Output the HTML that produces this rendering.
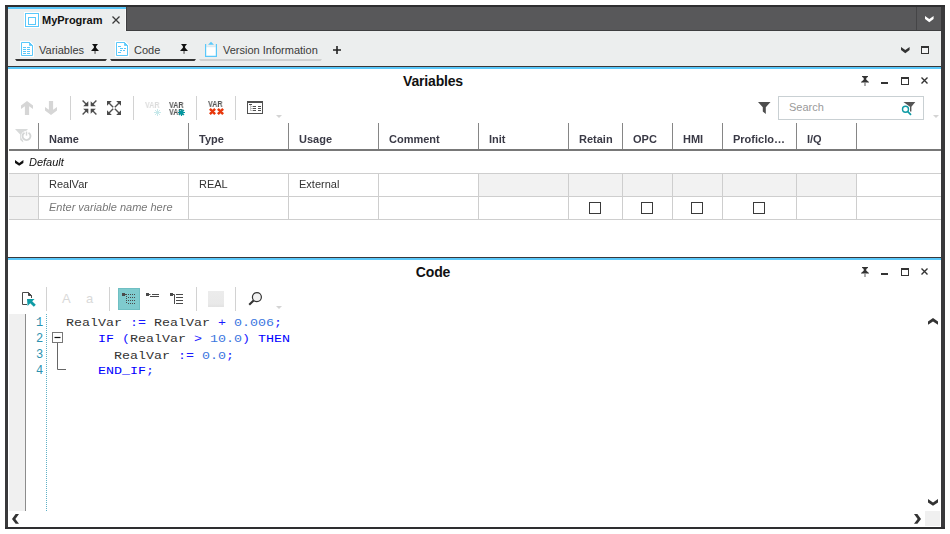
<!DOCTYPE html>
<html lang="en">
<head>
<meta charset="utf-8">
<title>MyProgram</title>
<style>
html,body{margin:0;padding:0;background:#fff;}
body{width:950px;height:534px;overflow:hidden;position:relative;font-family:"Liberation Sans",sans-serif;font-size:11px;color:#333;}
div,span{box-sizing:border-box;}
.a{position:absolute;}
.t{position:absolute;white-space:nowrap;line-height:14px;height:14px;}
.b{font-weight:bold;}
.h{color:#3a3a46;}
.i{font-style:italic;}
.vsep{position:absolute;width:1px;height:24px;background:#d2d2d2;}
.gl{position:absolute;background:#cecece;}
.gf{position:absolute;background:#f2f2f2;}
.cb{position:absolute;width:12px;height:12px;border:1.5px solid #3a3a3a;background:#fff;}
svg{position:absolute;overflow:visible;}
.mono{font-family:"Liberation Mono",monospace;font-size:11.5px;letter-spacing:1.1px;line-height:16px;white-space:pre;}
.var{font-size:8.5px;line-height:10px;height:10px;font-weight:bold;color:#555;transform:scaleX(.84);transform-origin:0 0;will-change:transform;}
.k{color:#0000ff;}
.o{color:#1a1aff;}
.n{color:#3b78e0;}
.ln{color:#2b91af;font-size:12px !important;letter-spacing:0 !important;}
</style>
</head>
<body>
<!-- outer frame -->
<div class="a" style="left:5px;top:5px;width:940px;height:524px;background:#39393b;"></div>
<div class="a" style="left:5px;top:527px;width:940px;height:2px;background:#2e2e30;"></div>
<div class="a" style="left:5px;top:5px;width:940px;height:2px;background:#2e2e30;"></div>
<div class="a" style="left:8px;top:7px;width:933px;height:520px;background:#fff;"></div>

<!-- top tab bar -->
<div class="a" style="left:8px;top:7px;width:933px;height:24px;background:#58585a;border-bottom:1px solid #3e3e40;"></div>
<div class="a" style="left:916px;top:7px;width:1px;height:23px;background:#454547;"></div>
<div class="a" style="left:8px;top:7px;width:118px;height:24px;background:#eceeee;border-top:2px solid #5ac8fa;"></div>
<div class="a" style="left:125px;top:9px;width:1px;height:22px;background:#f7f8f8;"></div>
<div class="a" style="left:126px;top:7px;width:1px;height:23px;background:#3e3e40;"></div>
<!-- sub bar -->
<div class="a" style="left:8px;top:31px;width:933px;height:35px;background:#eceeee;"></div>

<!--TABS-BEGIN-->
<!-- program tab -->
<svg style="left:24px;top:12px;" width="16" height="16" viewBox="0 0 16 16">
  <rect x="0" y="0" width="16" height="16" fill="#fff"/>
  <rect x="1.5" y="1.5" width="13" height="13" fill="none" stroke="#5ac8fa" stroke-width="1"/>
  <rect x="4.5" y="5.5" width="7" height="7" fill="none" stroke="#5ac8fa" stroke-width="1"/>
</svg>
<div class="t b" style="left:42px;top:13px;color:#111;">MyProgram</div>
<svg style="left:112px;top:16px;" width="8" height="8" viewBox="0 0 8 8"><path d="M0.5 0.5 L7.5 7.5 M7.5 0.5 L0.5 7.5" stroke="#3a3a3a" stroke-width="1.25" fill="none"/></svg>
<!-- chevron top right (white) -->
<svg style="left:924.7px;top:16px;" width="8.6" height="6.2" viewBox="0 0 8.6 6.2"><path d="M0 0 L4.3 3.1 L8.6 0 V3.1 L4.3 6.2 L0 3.1 Z" fill="#fff"/></svg>

<!-- sub tabs -->
<!-- Variables icon -->
<svg style="left:20px;top:41px;" width="14" height="16" viewBox="0 0 14 16">
  <path d="M0 0 H10 L14 4 V16 H0 Z" fill="#fff"/>
  <path d="M1.5 1.5 H9.5 L12.5 4.5 V14.5 H1.5 Z" fill="#fff" stroke="#5ac8fa" stroke-width="1"/>
  <path d="M9.5 1.5 V4.5 H12.5 Z" fill="#5ac8fa" stroke="#5ac8fa" stroke-width="0.8"/>
  <path d="M3 6.5 H6 M7 6.5 H10 M3 8.5 H6 M7 8.5 H10 M3 10.5 H6 M7 10.5 H10 M3 12.5 H6 M7 12.5 H10" stroke="#5ac8fa" stroke-width="1"/>
</svg>
<div class="t" style="left:39px;top:43px;color:#3a3a3a;">Variables</div>
<svg class="pin" style="left:91px;top:44px;" width="8" height="10" viewBox="0 0 8 10"><path d="M1 0 H7 L5.1 2.2 V3.8 L8 7 H0 L2.9 3.8 V2.2 Z" fill="#111"/><rect x="3.3" y="7" width="1.5" height="2.8" fill="#777"/></svg>
<svg style="left:15px;top:59px;" width="92" height="2" viewBox="0 0 92 2"><path d="M0 0 H92 L90.5 2 H1.5 Z" fill="#333"/></svg>

<!-- Code icon -->
<svg style="left:115px;top:41px;" width="14" height="16" viewBox="0 0 14 16">
  <path d="M0 0 H10 L14 4 V16 H0 Z" fill="#fff"/>
  <path d="M1.5 1.5 H9.5 L12.5 4.5 V14.5 H1.5 Z" fill="#fff" stroke="#5ac8fa" stroke-width="1"/>
  <path d="M9.5 1.5 V4.5 H12.5 Z" fill="#5ac8fa" stroke="#5ac8fa" stroke-width="0.8"/>
  <path d="M3 5.5 H6 M5 7.5 H8 M9 7.5 H11 M5 9.5 H7 M8 9.5 H10 M3 11.5 H6" stroke="#5ac8fa" stroke-width="1"/>
</svg>
<div class="t" style="left:134px;top:43px;color:#3a3a3a;">Code</div>
<svg class="pin" style="left:180px;top:44px;" width="8" height="10" viewBox="0 0 8 10"><path d="M1 0 H7 L5.1 2.2 V3.8 L8 7 H0 L2.9 3.8 V2.2 Z" fill="#111"/><rect x="3.3" y="7" width="1.5" height="2.8" fill="#777"/></svg>
<svg style="left:110px;top:59px;" width="86" height="2" viewBox="0 0 86 2"><path d="M0 0 H86 L84.5 2 H1.5 Z" fill="#333"/></svg>

<!-- Version info icon (clipboard) -->
<svg style="left:204px;top:41px;" width="14" height="16" viewBox="0 0 14 16">
  <rect x="2" y="6" width="10" height="9.5" fill="#fff"/>
  <path d="M1.6 3 V15.4 H12.4 V3" fill="none" stroke="#5ac8fa" stroke-width="1.2"/>
  <path d="M2 5.8 H12" stroke="#bfe6fa" stroke-width="0.6"/>
  <path d="M4 3.8 L7 0.7 L10 3.8 Z" fill="#5ac8fa"/>
</svg>
<div class="t" style="left:223px;top:43px;color:#3a3a3a;">Version Information</div>
<svg style="left:199px;top:59px;" width="123" height="2" viewBox="0 0 123 2"><path d="M0 0 H123 L121.5 2 H1.5 Z" fill="#cfd1d1"/></svg>
<!-- plus -->
<svg style="left:333px;top:46px;" width="8" height="8" viewBox="0 0 8 8"><path d="M4 0 V8 M0 4 H8" stroke="#222" stroke-width="1.6"/></svg>
<!-- right chevron + square -->
<svg style="left:900.8px;top:46.8px;" width="8.6" height="6.2" viewBox="0 0 8.6 6.2"><path d="M0 0 L4.3 3.1 L8.6 0 V3.1 L4.3 6.2 L0 3.1 Z" fill="#333"/></svg>
<svg style="left:921px;top:46px;" width="8" height="8" viewBox="0 0 8 8"><rect x="0.5" y="0.5" width="7" height="7" fill="#f3f4f4" stroke="#333" stroke-width="1"/><rect x="0" y="0" width="8" height="2" fill="#333"/></svg>
<!--TABS-END-->

<!-- panel 1 top lines -->
<div class="a" style="left:8px;top:66px;width:933px;height:1px;background:#38383a;"></div>
<div class="a" style="left:8px;top:67px;width:933px;height:2px;background:#5ac8fa;"></div>
<!-- panel 2 top lines -->
<div class="a" style="left:8px;top:257px;width:933px;height:1px;background:#38383a;"></div>
<div class="a" style="left:8px;top:258px;width:933px;height:2px;background:#5ac8fa;"></div>

<!--VARS-BEGIN-->
<!-- ===== Variables panel ===== -->
<div class="t b" style="left:232px;top:72px;width:402px;text-align:center;font-size:14px;letter-spacing:-0.17px;line-height:18px;height:18px;color:#111;">Variables</div>
<!-- window controls -->
<svg style="left:861px;top:76px;" width="8" height="10" viewBox="0 0 8 10"><path d="M1 0 H7 V0.8 L5.3 2 V3.8 L8 6 V6.6 H0 V6 L2.7 3.8 V2 L1 0.8 Z" fill="#333"/><rect x="3.4" y="6.6" width="1.2" height="3.4" fill="#777"/></svg>
<div class="a" style="left:881px;top:82px;width:7px;height:2px;background:#333;"></div>
<svg style="left:901px;top:77px;" width="8" height="8" viewBox="0 0 8 8"><rect x="0.5" y="0.5" width="7" height="7" fill="#fff" stroke="#333" stroke-width="1"/><rect x="0" y="0" width="8" height="2" fill="#333"/></svg>
<svg style="left:921px;top:77px;" width="7" height="7" viewBox="0 0 7 7"><path d="M0.5 0.5 L6.5 6.5 M6.5 0.5 L0.5 6.5" stroke="#333" stroke-width="1.4" fill="none"/></svg>

<!-- toolbar: up/down arrows (disabled) -->
<svg style="left:21px;top:101px;" width="12" height="14" viewBox="0 0 12 14"><path d="M6 0 L12 4.6 V8 L8.1 5.2 V14 H3.9 V5.2 L0 8 V4.6 Z" fill="#d6d6d6"/></svg>
<svg style="left:45px;top:101px;" width="12" height="14" viewBox="0 0 12 14"><path d="M6 14 L12 9.4 V6 L8.1 8.8 V0 H3.9 V8.8 L0 6 V9.4 Z" fill="#d6d6d6"/></svg>
<div class="vsep" style="left:70px;top:96px;"></div>
<!-- collapse -->
<svg style="left:82px;top:100px;" width="15" height="15" viewBox="0 0 15 15">
  <g stroke="#505050" stroke-width="1.4" fill="none">
    <path d="M0.6 0.6 L5 5 M14.4 0.6 L10 5 M0.6 14.4 L5 10 M14.4 14.4 L10 10"/>
  </g>
  <g fill="#4a4a4a">
    <path d="M6.3 1.2 V6.3 H1.2 Z"/><path d="M8.7 1.2 V6.3 H13.8 Z"/><path d="M6.3 13.8 V8.7 H1.2 Z"/><path d="M8.7 13.8 V8.7 H13.8 Z"/>
  </g>
</svg>
<!-- expand -->
<svg style="left:107px;top:101px;" width="14" height="14" viewBox="0 0 14 14">
  <g stroke="#505050" stroke-width="1.4" fill="none">
    <path d="M2 2 L6.2 6.2 M12 2 L7.8 6.2 M2 12 L6.2 7.8 M12 12 L7.8 7.8"/>
  </g>
  <g fill="#4a4a4a">
    <path d="M0 0 H4.8 L0 4.8 Z"/><path d="M14 0 H9.2 L14 4.8 Z"/><path d="M0 14 H4.8 L0 9.2 Z"/><path d="M14 14 H9.2 L14 9.2 Z"/>
  </g>
</svg>
<div class="vsep" style="left:133px;top:96px;"></div>
<!-- VAR * (disabled) -->
<div class="t var" style="left:145px;top:100px;color:#dcdcdc;">VAR</div>
<svg style="left:154px;top:109px;" width="7" height="7" viewBox="0 0 7 7"><path d="M3.5 0 V7 M0 3.5 H7 M1 1 L6 6 M6 1 L1 6" stroke="#c3e6e9" stroke-width="0.9" fill="none"/></svg>
<!-- VAR VAR * -->
<div class="t var" style="left:169px;top:100px;">VAR</div>
<div class="t var" style="left:169px;top:107px;">VAR</div>
<svg style="left:178px;top:109px;" width="7" height="7" viewBox="0 0 7 7"><circle cx="3.5" cy="3.5" r="1.6" fill="#0097a0"/><path d="M3.5 0 V7 M0 3.5 H7 M1 1 L6 6 M6 1 L1 6" stroke="#0097a0" stroke-width="1.2" fill="none"/></svg>
<div class="vsep" style="left:196px;top:96px;"></div>
<!-- VAR XX -->
<div class="t var" style="left:208px;top:99px;">VAR</div>
<svg style="left:209px;top:108px;" width="15" height="7" viewBox="0 0 15 7"><path d="M0.9 0.9 L6.1 6.1 M6.1 0.9 L0.9 6.1 M8.9 0.9 L14.1 6.1 M14.1 0.9 L8.9 6.1" stroke="#e8380d" stroke-width="2.5" fill="none"/></svg>
<div class="vsep" style="left:235px;top:96px;"></div>
<!-- table icon -->
<svg style="left:247px;top:101px;" width="16" height="13" viewBox="0 0 16 13">
  <rect x="0.5" y="0.5" width="15" height="12" fill="#fff" stroke="#505050" stroke-width="1"/>
  <rect x="0" y="0" width="16" height="2" fill="#505050"/>
  <path d="M2 3.5 H5" stroke="#505050" stroke-width="1"/>
  <path d="M3.5 4 V10 M4 5.5 H6 M4 7.5 H6 M4 9.5 H6" stroke="#c4c4c4" stroke-width="1" fill="none"/>
  <path d="M6 5.5 H9 M11 5.5 H14 M6 7.5 H9 M11 7.5 H14 M6 9.5 H9 M11 9.5 H14" stroke="#505050" stroke-width="1"/>
</svg>
<svg style="left:276px;top:115px;" width="6" height="3" viewBox="0 0 6 3"><path d="M0 0 H6 L3 3 Z" fill="#d4d4d4"/></svg>

<!-- filter + search -->
<svg style="left:758px;top:102px;" width="13" height="12" viewBox="0 0 13 12"><path d="M0 0 H12.5 L7.8 5.3 V12 L4.8 9.6 V5.3 Z" fill="#4d4d4d"/></svg>
<div class="a" style="left:778px;top:96px;width:146px;height:24px;border:1px solid #c9d0d3;background:#fff;"></div>
<div class="t" style="left:789px;top:99px;line-height:16px;height:16px;color:#9a9a9a;">Search</div>
<svg style="left:901px;top:102px;" width="15" height="14" viewBox="0 0 15 14">
  <path d="M2.4 0 H14.3 L10.4 4.8 V9.6 H9 V4.8 Z" fill="#555"/>
  <circle cx="4.5" cy="7.3" r="3" fill="#fff" stroke="#0f9ba5" stroke-width="1.4"/>
  <path d="M6.8 9.6 L10 12.8" stroke="#0f9ba5" stroke-width="1.7" fill="none"/>
</svg>
<svg style="left:933px;top:115px;" width="6" height="3" viewBox="0 0 6 3"><path d="M0 0 H6 L3 3 Z" fill="#d4d4d4"/></svg>

<!-- grid: fills -->
<div class="gf" style="left:9px;top:174px;width:29px;height:45px;"></div>
<div class="gf" style="left:479px;top:174px;width:377px;height:22px;"></div>
<!-- header filter icon (disabled) -->
<svg style="left:15px;top:129px;" width="17" height="14" viewBox="0 0 17 14">
  <path d="M0 0 H13 L8.2 5.5 V13.5 L5.2 11 V5.5 Z" fill="#d8dada"/>
  <circle cx="11.5" cy="7.2" r="5.5" fill="#fff"/>
  <path d="M9.5 3.7 A4 4 0 1 0 13.5 3.7" fill="none" stroke="#d4d6d6" stroke-width="1.9"/>
  <path d="M11.5 2.6 V6.6" stroke="#d4d6d6" stroke-width="1.4"/>
</svg>
<!-- header vertical lines -->
<div class="a" style="left:38px;top:123px;width:1px;height:26px;background:#868686;"></div>
<div class="a" style="left:188px;top:123px;width:1px;height:26px;background:#868686;"></div>
<div class="a" style="left:288px;top:123px;width:1px;height:26px;background:#868686;"></div>
<div class="a" style="left:378px;top:123px;width:1px;height:26px;background:#868686;"></div>
<div class="a" style="left:478px;top:123px;width:1px;height:26px;background:#868686;"></div>
<div class="a" style="left:568px;top:123px;width:1px;height:26px;background:#868686;"></div>
<div class="a" style="left:622px;top:123px;width:1px;height:26px;background:#868686;"></div>
<div class="a" style="left:672px;top:123px;width:1px;height:26px;background:#868686;"></div>
<div class="a" style="left:722px;top:123px;width:1px;height:26px;background:#868686;"></div>
<div class="a" style="left:796px;top:123px;width:1px;height:26px;background:#868686;"></div>
<div class="a" style="left:856px;top:123px;width:1px;height:26px;background:#868686;"></div>
<!-- header bottom line -->
<div class="a" style="left:9px;top:149px;width:932px;height:2px;background:#787878;"></div>
<!-- header labels -->
<div class="t b h" style="left:49px;top:132px;">Name</div>
<div class="t b h" style="left:199px;top:132px;">Type</div>
<div class="t b h" style="left:299px;top:132px;">Usage</div>
<div class="t b h" style="left:389px;top:132px;">Comment</div>
<div class="t b h" style="left:489px;top:132px;">Init</div>
<div class="t b h" style="left:579px;top:132px;">Retain</div>
<div class="t b h" style="left:633px;top:132px;">OPC</div>
<div class="t b h" style="left:683px;top:132px;">HMI</div>
<div class="t b h" style="left:733px;top:132px;">Proficlo…</div>
<div class="t b h" style="left:807px;top:132px;">I/Q</div>
<!-- group row -->
<svg style="left:15px;top:160px;" width="8.4" height="5.8" viewBox="0 0 8.4 5.8"><path d="M0 0 L4.2 2.9 L8.4 0 V2.9 L4.2 5.8 L0 2.9 Z" fill="#111"/></svg>
<div class="t i" style="left:29px;top:155px;color:#111;">Default</div>
<!-- horizontal grid lines -->
<div class="gl" style="left:9px;top:173px;width:932px;height:1px;"></div>
<div class="gl" style="left:9px;top:196px;width:932px;height:1px;"></div>
<div class="gl" style="left:9px;top:219px;width:932px;height:1px;"></div>
<!-- vertical grid lines -->
<div class="gl" style="left:38px;top:174px;width:1px;height:45px;"></div>
<div class="gl" style="left:188px;top:174px;width:1px;height:45px;"></div>
<div class="gl" style="left:288px;top:174px;width:1px;height:45px;"></div>
<div class="gl" style="left:378px;top:174px;width:1px;height:45px;"></div>
<div class="gl" style="left:478px;top:174px;width:1px;height:45px;"></div>
<div class="gl" style="left:568px;top:174px;width:1px;height:45px;"></div>
<div class="gl" style="left:622px;top:174px;width:1px;height:45px;"></div>
<div class="gl" style="left:672px;top:174px;width:1px;height:45px;"></div>
<div class="gl" style="left:722px;top:174px;width:1px;height:45px;"></div>
<div class="gl" style="left:796px;top:174px;width:1px;height:45px;"></div>
<div class="gl" style="left:856px;top:174px;width:1px;height:45px;"></div>
<!-- row 1 -->
<div class="t" style="left:49px;top:177px;">RealVar</div>
<div class="t" style="left:199px;top:177px;">REAL</div>
<div class="t" style="left:299px;top:177px;">External</div>
<!-- row 2 -->
<div class="t i" style="left:49px;top:200px;color:#777;">Enter variable name here</div>
<div class="cb" style="left:589px;top:202px;"></div>
<div class="cb" style="left:641px;top:202px;"></div>
<div class="cb" style="left:691px;top:202px;"></div>
<div class="cb" style="left:753px;top:202px;"></div>
<!--VARS-END-->

<!--CODE-BEGIN-->
<!-- ===== Code panel ===== -->
<div class="t b" style="left:232px;top:263px;width:402px;text-align:center;font-size:14px;letter-spacing:-0.17px;line-height:18px;height:18px;color:#111;">Code</div>
<!-- window controls -->
<svg style="left:861px;top:267px;" width="8" height="10" viewBox="0 0 8 10"><path d="M1 0 H7 V0.8 L5.3 2 V3.8 L8 6 V6.6 H0 V6 L2.7 3.8 V2 L1 0.8 Z" fill="#333"/><rect x="3.4" y="6.6" width="1.2" height="3.4" fill="#777"/></svg>
<div class="a" style="left:881px;top:273px;width:7px;height:2px;background:#333;"></div>
<svg style="left:901px;top:268px;" width="8" height="8" viewBox="0 0 8 8"><rect x="0.5" y="0.5" width="7" height="7" fill="#fff" stroke="#333" stroke-width="1"/><rect x="0" y="0" width="8" height="2" fill="#333"/></svg>
<svg style="left:921px;top:268px;" width="7" height="7" viewBox="0 0 7 7"><path d="M0.5 0.5 L6.5 6.5 M6.5 0.5 L0.5 6.5" stroke="#333" stroke-width="1.4" fill="none"/></svg>

<!-- toolbar -->
<svg style="left:22px;top:292px;" width="14" height="15" viewBox="0 0 14 15">
  <path d="M0.5 0.5 H6.5 L9.5 3.5 V6 M5 12.5 H0.5 V0.5" fill="none" stroke="#4a4a4a" stroke-width="1"/>
  <path d="M6.5 0.5 V3.5 H9.5 Z" fill="#4a4a4a" stroke="#4a4a4a" stroke-width="1"/>
  <path d="M5 7 H12.6 L10.2 9.2 L13.8 12.8 L11.8 14.8 L8.2 11.2 L5.6 14 Z" fill="#0f9ba5"/>
</svg>
<div class="vsep" style="left:46px;top:287px;"></div>
<div class="t" style="left:62px;top:291px;font-size:13px;line-height:16px;height:16px;color:#d9d9d9;">A</div>
<div class="t" style="left:86px;top:291px;font-size:13px;line-height:16px;height:16px;color:#d9d9d9;">a</div>
<div class="vsep" style="left:109px;top:287px;"></div>
<div class="a" style="left:118px;top:288px;width:22px;height:22px;background:#7fcbce;border:1px solid #6fbfc3;"></div>
<svg style="left:122px;top:293px;" width="14" height="12" viewBox="0 0 14 12">
  <rect x="0" y="0" width="3" height="3" fill="#4a4a4a"/>
  <path d="M3 1.5 H5" stroke="#4a4a4a" stroke-width="1"/>
  <path d="M6 1.5 H13 M6 4.5 H13 M6 7.5 H13 M6 10.5 H13" stroke="#4a4a4a" stroke-width="1" stroke-dasharray="1 1"/>
  <path d="M4.5 3 V10" stroke="#4a4a4a" stroke-width="1" stroke-dasharray="1 1"/>
</svg>
<svg style="left:146px;top:293px;" width="14" height="5" viewBox="0 0 14 5">
  <rect x="0" y="0" width="3" height="3" fill="#4a4a4a"/>
  <path d="M3 1.5 H4.5 M6 1.5 H13 M4 3.5 H13" stroke="#4a4a4a" stroke-width="1"/>
</svg>
<svg style="left:170px;top:293px;" width="14" height="12" viewBox="0 0 14 12">
  <rect x="0" y="0" width="3" height="3" fill="#4a4a4a"/>
  <path d="M3 1.5 H4.5 V11" stroke="#4a4a4a" stroke-width="1" fill="none"/>
  <path d="M6 1.5 H13 M6 4.5 H13 M6 7.5 H13 M6 10.5 H13" stroke="#4a4a4a" stroke-width="1"/>
</svg>
<div class="vsep" style="left:196px;top:287px;"></div>
<div class="a" style="left:208px;top:291px;width:16px;height:16px;background:linear-gradient(#ececec,#e9e9e9 80%,#e2e2e2);"></div>
<div class="vsep" style="left:235px;top:287px;"></div>
<svg style="left:248px;top:292px;" width="15" height="14" viewBox="0 0 15 14">
  <circle cx="8.9" cy="5.1" r="4.5" fill="#f2f2f2" stroke="#333" stroke-width="1.2"/>
  <path d="M5.6 8.6 L1.2 12.8" stroke="#333" stroke-width="2.1" fill="none"/>
</svg>
<svg style="left:276px;top:306px;" width="6" height="3" viewBox="0 0 6 3"><path d="M0 0 H6 L3 3 Z" fill="#d4d4d4"/></svg>

<!-- editor gutter -->
<div class="a" style="left:9px;top:314px;width:16px;height:197px;background:#f0f0f0;"></div>
<div class="a" style="left:25px;top:314px;width:1px;height:197px;background:#8c8c8c;"></div>
<div class="a" style="left:46px;top:314px;width:0;height:197px;border-left:1px dotted #5fb0c6;"></div>
<!-- line numbers -->
<div class="a mono ln" style="left:36px;top:315px;">1
2
3
4</div>
<!-- fold marker -->
<svg style="left:52px;top:332px;" width="14" height="38" viewBox="0 0 14 38">
  <rect x="0.5" y="0.5" width="10" height="10" fill="#fff" stroke="#777" stroke-width="1"/>
  <path d="M2.5 5.5 H8.5" stroke="#111" stroke-width="1.2"/>
  <path d="M5.5 11 V37.5 H14" stroke="#666" stroke-width="1" fill="none"/>
</svg>
<!-- code -->
<div class="a mono" id="code" style="left:66px;top:316px;color:#333;font-size:13.333px;letter-spacing:0;line-height:18.39px;transform:scaleY(.87);transform-origin:0 0;">RealVar <span class="o">:=</span> RealVar <span class="o">+</span> <span class="n">0.006</span><span class="o">;</span>
    <span class="k">IF</span> <span class="o">(</span>RealVar <span class="o">&gt;</span> <span class="n">10.0</span><span class="o">)</span> <span class="k">THEN</span>
      RealVar <span class="o">:=</span> <span class="n">0.0</span><span class="o">;</span>
    <span class="k">END_IF</span><span class="o">;</span></div>

<!-- scroll chevrons -->
<svg style="left:928px;top:318px;" width="10" height="6.8" viewBox="0 0 10 6.8"><path d="M0 6.8 L5.0 3.4 L10 6.8 V3.4 L5.0 0 L0 3.4 Z" fill="#333"/></svg>
<svg style="left:928px;top:499px;" width="10" height="6.8" viewBox="0 0 10 6.8"><path d="M0 0 L5.0 3.4 L10 0 V3.4 L5.0 6.8 L0 3.4 Z" fill="#333"/></svg>
<svg style="left:12px;top:514.1px;" width="7" height="9.8" viewBox="0 0 7 9.8"><path d="M7 0 L3.36 4.9 L7 9.8 H3.64 L0 4.9 L3.64 0 Z" fill="#333"/></svg>
<svg style="left:914px;top:514.1px;" width="7" height="9.8" viewBox="0 0 7 9.8"><path d="M0 0 L3.64 4.9 L0 9.8 H3.36 L7 4.9 L3.36 0 Z" fill="#333"/></svg>
<div class="a" style="left:925px;top:511px;width:15px;height:15px;background:#f0f0f0;"></div>
<!--CODE-END-->

</body>
</html>
